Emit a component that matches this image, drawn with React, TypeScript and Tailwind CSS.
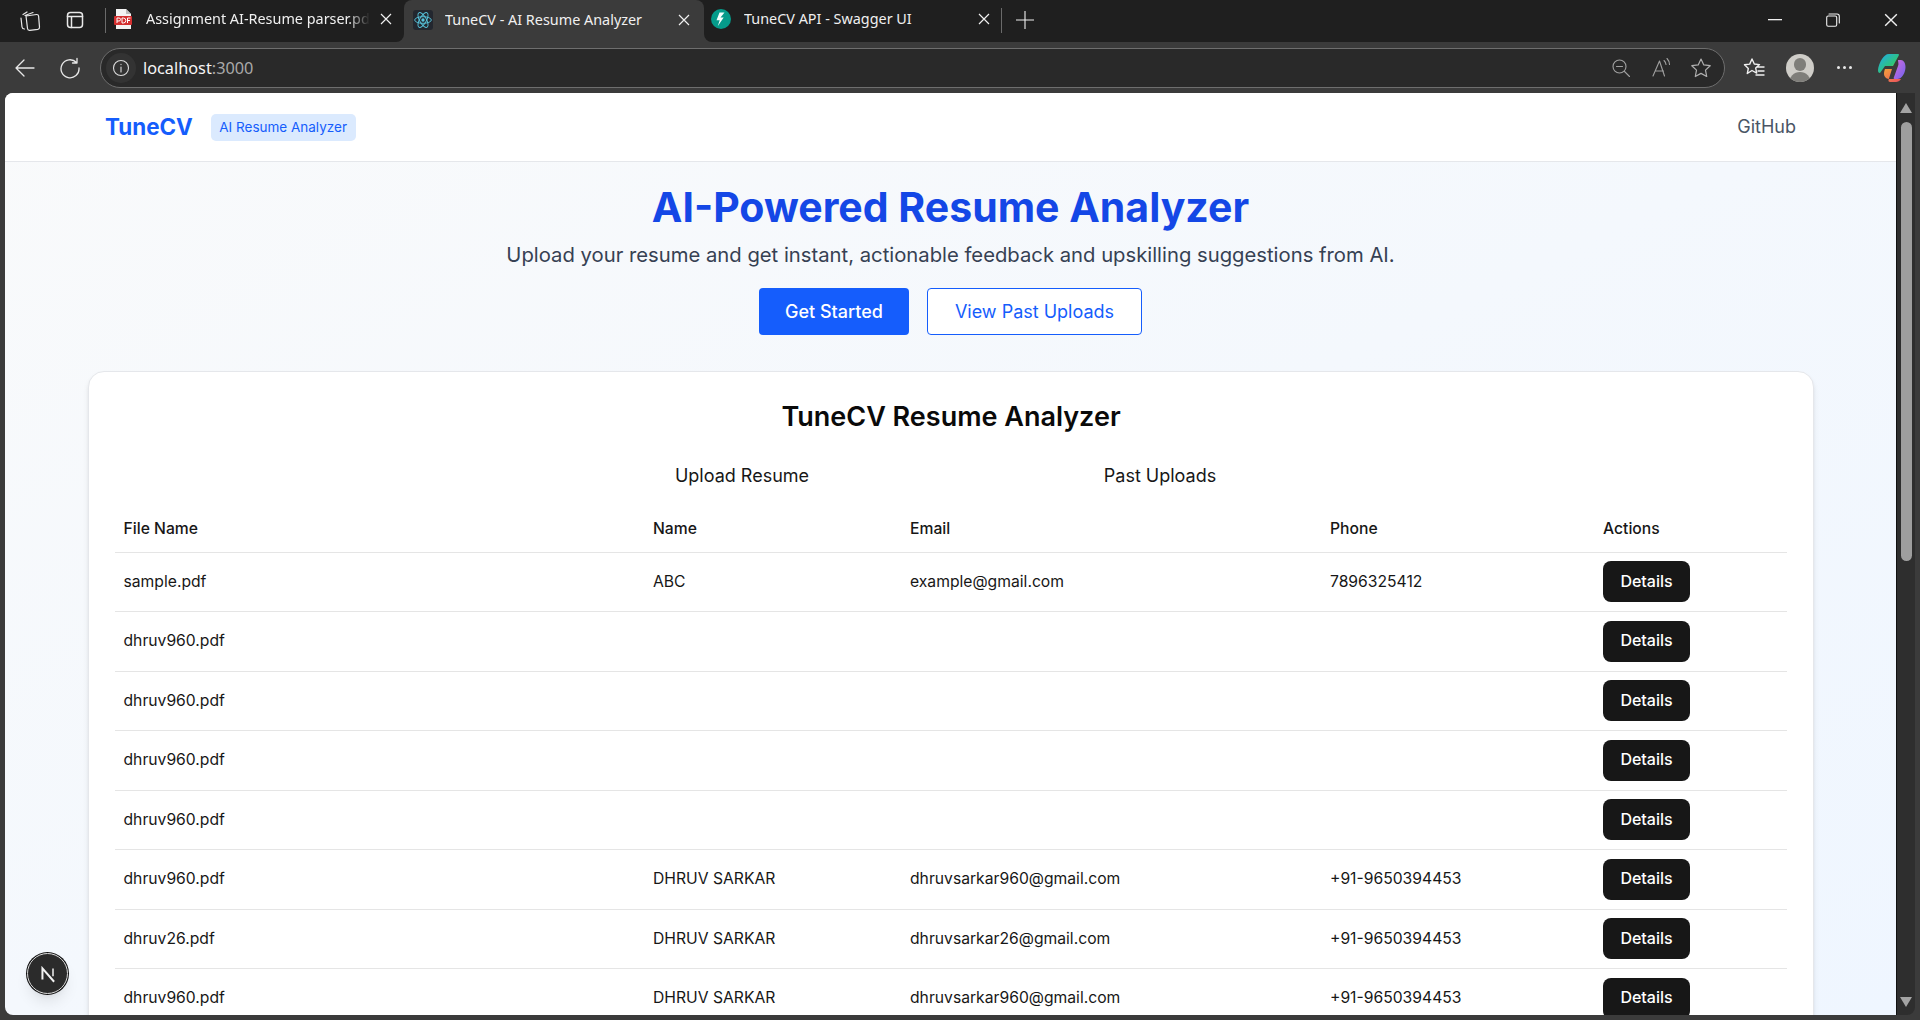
import React from "react";

const Stroke = ({ children, size = 20, w = 1.2, color = "#e8e8e8", vb = 20 }: { children: React.ReactNode; size?: number; w?: number; color?: string; vb?: number }) => (
  <svg width={size} height={size} viewBox={`0 0 ${vb} ${vb}`} fill="none" stroke={color} strokeWidth={w} strokeLinecap="round" strokeLinejoin="round">
    {children}
  </svg>
);

const Close = ({ size = 12 }: { size?: number }) => (
  <svg width={size} height={size} viewBox="0 0 12 12" fill="none" stroke="#f0f0f0" strokeWidth={1.2}>
    <path d="M1 1l10 10M11 1L1 11" />
  </svg>
);

const PdfIcon = () => (
  <svg width="20" height="22" viewBox="0 0 20 22">
    <path d="M3 1h10l5 5v15H3z" fill="#f3f3f3" />
    <path d="M13 1l5 5h-5z" fill="#bdbdbd" />
    <rect x="1" y="8" width="18" height="9" rx="1" fill="#d32f2f" />
    <path d="M4 15v-5h2a1.3 1.3 0 010 3H4M9 10v5h1.3a2.5 2.5 0 000-5zM14.500 15v-5h3M14.500 12.500h2.500" fill="none" stroke="#fff" strokeWidth="1" />
  </svg>
);

const ReactIcon = () => (
  <div className="w-5 h-5 bg-[#23272f] rounded-[3px] flex items-center justify-center">
    <svg width="20" height="20" viewBox="-12 -12 24 24" fill="none" stroke="#58c4dc" strokeWidth="1.1">
      <circle r="2" fill="#58c4dc" stroke="none" />
      <ellipse rx="10" ry="4" />
      <ellipse rx="10" ry="4" transform="rotate(60)" />
      <ellipse rx="10" ry="4" transform="rotate(120)" />
    </svg>
  </div>
);

const FastApiIcon = () => (
  <svg width="20" height="20" viewBox="0 0 20 20">
    <circle cx="10" cy="10" r="10" fill="#059b8a" />
    <path d="M13.500 3.500H8.500L5.500 11.300h3.200l-2 6 6-8.700H9.500z" fill="#f4fffd" />
  </svg>
);

const Copilot = () => (
  <svg width="28" height="30" viewBox="0 0 28 30">
    <defs>
      <linearGradient id="cpa" x1="0" y1="0" x2="1" y2="1">
        <stop offset="0" stopColor="#1fa8f0" />
        <stop offset="0.6" stopColor="#2fc47c" />
        <stop offset="1" stopColor="#e6d92e" />
      </linearGradient>
      <linearGradient id="cpb" x1="0" y1="0" x2="1" y2="1">
        <stop offset="0" stopColor="#d76bdc" />
        <stop offset="1" stopColor="#6f63ee" />
      </linearGradient>
      <linearGradient id="cpc" x1="0" y1="0" x2="1" y2="1">
        <stop offset="0" stopColor="#f2a13a" />
        <stop offset="1" stopColor="#ea4f5f" />
      </linearGradient>
    </defs>
    <path d="M11 1h9c1.500 0 1 1 .5 2L15 13H7l-5 7c-1.500 0-2-1-2-3 0-3 2-8 4-11 2-3 4-5 7-5z" fill="url(#cpa)" />
    <path d="M20 7h3c2.500 0 4.500 3 4.500 7 0 5-2.500 9-5 11-1 .8-2.500 1-4 1h-2c-1 0-1-1-.5-2L20 13c1-2 0-4 0-6z" fill="url(#cpb)" />
    <path d="M7 16h7l-3.500 11c-.3 1 .5 2 1.500 2h6c1.500 0 4-1 5-3H11c-3 0-5-3-5-5 0-2 .5-4 1-5z" fill="url(#cpc)" />
  </svg>
);

const Details = () => (
  <button className="w-[87px] h-[41px] rounded-lg bg-[#171717] text-white text-base font-medium flex items-center justify-center pb-[2px]">Details</button>
);

const rows = [
  ["sample.pdf", "ABC", "example@gmail.com", "7896325412"],
  ["dhruv960.pdf", "", "", ""],
  ["dhruv960.pdf", "", "", ""],
  ["dhruv960.pdf", "", "", ""],
  ["dhruv960.pdf", "", "", ""],
  ["dhruv960.pdf", "DHRUV SARKAR", "dhruvsarkar960@gmail.com", "+91-9650394453"],
  ["dhruv26.pdf", "DHRUV SARKAR", "dhruvsarkar26@gmail.com", "+91-9650394453"],
  ["dhruv960.pdf", "DHRUV SARKAR", "dhruvsarkar960@gmail.com", "+91-9650394453"],
];

const Tab = ({ icon, label, width, pad, textClass }: { icon: React.ReactNode; label: string; width: string; pad: string; textClass: string }) => (
  <div className={`${width} ${pad} h-[42px] pb-[2px] flex items-center shrink-0`}>
    <div className="w-5 flex justify-center shrink-0">{icon}</div>
    <span className={`flex-1 min-w-0 overflow-hidden whitespace-nowrap text-[14.4px] text-[#f0f0f0] [font-family:'Noto_Sans',sans-serif] ${textClass}`}>{label}</span>
    <Close />
  </div>
);

export default function App() {
  return (
    <div className="w-[1920px] h-[1020px] overflow-hidden bg-[#3b3b3b] flex flex-col [font-family:Inter,sans-serif]">
      {/* tab strip */}
      <div className="h-[42px] bg-[#3b3b3b] flex shrink-0">
        <div className="h-[42px] pb-[2px] bg-[#1f1f1f] rounded-br-lg flex items-center shrink-0">
          <div className="w-[52px] flex justify-end pr-[10px]">
            <Stroke size={24} vb={24} w={1.2}>
              <path d="M5 6.500l4-2.500M3 10l1 9c.2 1.300 1.500 2 2.500 2M7 7.500l8-3 M8 8l10.500-1.500c1.200-.1 2 .6 2.100 1.600l.9 11c.1 1.200-.7 2-1.700 2.200l-8 1c-1.200.1-2.200-.6-2.300-1.800L8 8z" />
            </Stroke>
          </div>
          <div className="w-[33px] flex justify-end">
            <Stroke size={20} w={1.5}>
              <rect x="2.500" y="2.500" width="15" height="15" rx="3" />
              <path d="M2.500 6.500h15M6.500 6.500v11" />
            </Stroke>
          </div>
          <div className="w-px h-[25px] bg-[#6a6a6a] ml-[20px]" />
          <Tab icon={<PdfIcon />} label="Assignment AI-Resume parser.pdf" textClass="ml-[13px] mr-[10px] [mask-image:linear-gradient(to_right,black_90%,transparent)]" width="w-[298px]" pad="pl-[7px] pr-[12px]" />
        </div>
        <div className="bg-[#1f1f1f] shrink-0">
          <div className="rounded-t-lg bg-[#3b3b3b]">
            <Tab icon={<ReactIcon />} label="TuneCV - AI Resume Analyzer" textClass="ml-[12px]" width="w-[300px]" pad="pl-[9px] pr-[14px]" />
          </div>
        </div>
        <div className="flex-1 h-[42px] pb-[2px] bg-[#1f1f1f] rounded-bl-lg flex items-center">
          <Tab icon={<FastApiIcon />} label="TuneCV API - Swagger UI" textClass="ml-[13px]" width="w-[297px]" pad="pl-[7px] pr-[11px]" />
          <div className="w-px h-[25px] bg-[#6a6a6a]" />
          <div className="ml-[14px]">
            <svg width="18" height="18" viewBox="0 0 18 18" stroke="#f0f0f0" strokeWidth="1.1"><path d="M9 0v18M0 9h18" /></svg>
          </div>
          <div className="flex-1" />
          <div className="w-[58px] flex justify-center">
            <svg width="14" height="2" viewBox="0 0 14 2"><rect width="14" height="1.300" fill="#f0f0f0" /></svg>
          </div>
          <div className="w-[58px] flex justify-center">
            <Stroke size={14} vb={14} w={1.1} color="#f0f0f0">
              <rect x="0.700" y="3" width="10" height="10.300" rx="1.500" />
              <path d="M3 1h8a2.300 2.300 0 012.300 2.300V10" />
            </Stroke>
          </div>
          <div className="w-[58px] flex justify-center">
            <Close size={14} />
          </div>
        </div>
      </div>

      {/* address row */}
      <div className="h-[51px] flex items-center shrink-0">
        <div className="w-[48px] flex justify-center pl-[2px]">
          <Stroke size={22} w={1.3} vb={22}><path d="M20 11H2M10 3l-8 8 8 8" /></Stroke>
        </div>
        <div className="w-[44px] flex justify-center">
          <Stroke size={22} w={1.3} vb={22}><path d="M17.500 5.500A9 9 0 1020 11M18 1.500v4.500h-4.500" /></Stroke>
        </div>
        <div className="ml-[8px] w-[1625px] h-[40px] rounded-[20px] bg-[#292929] border border-[#6e6e6e] flex items-center">
          <div className="w-[30px] h-[30px] ml-[5px] rounded-full bg-[#333] flex items-center justify-center">
            <Stroke size={18} w={1.1} vb={18} color="#dcdcdc">
              <circle cx="9" cy="9" r="7.500" />
              <path d="M9 8v5M9 5.200v.4" />
            </Stroke>
          </div>
          <span className="ml-[7px] pt-[1px] text-[16.3px] leading-none text-[#f5f5f5] [font-family:'Noto_Sans',sans-serif]">
            localhost<span className="text-[#a8a8a8]">:3000</span>
          </span>
          <div className="flex-1" />
          <Stroke size={20} w={1.1} color="#a0a0a0">
            <circle cx="8.500" cy="8.500" r="6.500" />
            <path d="M5.500 8.500h6M13.500 13.500l5 5" />
          </Stroke>
          <div className="ml-[20px]">
            <Stroke size={22} w={1.1} vb={22} color="#a0a0a0">
              <path d="M2 19L8.500 4l5 15M4.500 14h8M13 3.500a6 6 0 012 4M16 1.500a9 9 0 012.500 6" />
            </Stroke>
          </div>
          <div className="ml-[17px] mr-[12px]">
            <Stroke size={22} w={1.2} vb={22} color="#b0b0b0">
              <path d="M11 2l2.800 5.900 6.400.8-4.700 4.400 1.200 6.400L11 16.400l-5.700 3.100 1.200-6.400-4.700-4.400 6.400-.8z" />
            </Stroke>
          </div>
        </div>
        <div className="ml-[18px]">
          <Stroke size={22} w={1.4} vb={22} color="#f0f0f0">
            <path d="M9 2l2.300 5 5.200.6-3.800 3.500 1 5L9 13.500l-4.700 3 1-5L1.500 7.800l5.200-.7zM14 10h7M15 14h6M13 18h8" />
          </Stroke>
        </div>
        <div className="ml-[21px] w-[28px] h-[28px] rounded-full bg-[#cfcdc8] overflow-hidden flex flex-col items-center">
          <div className="w-[12px] h-[13px] mt-[4px] rounded-full bg-[#7f7e7a] shrink-0" />
          <div className="w-[22px] h-[14px] mt-[1px] rounded-t-full bg-[#7f7e7a] shrink-0" />
        </div>
        <div className="ml-[21px] w-[18px] flex gap-[3px] justify-center">
          <div className="w-[3px] h-[3px] rounded-full bg-[#e8e8e8]" />
          <div className="w-[3px] h-[3px] rounded-full bg-[#e8e8e8]" />
          <div className="w-[3px] h-[3px] rounded-full bg-[#e8e8e8]" />
        </div>
        <div className="ml-[25px]"><Copilot /></div>
      </div>

      {/* browser viewport */}
      <div className="h-[922px] flex shrink-0 pl-[5px] pr-[5px]">
        <div className="w-[1891px] h-[922px] overflow-hidden rounded-tl-lg rounded-bl-lg bg-gradient-to-br from-[#f9fafb] to-[#eff6ff] flex flex-col relative shrink-0">
          <header className="h-[69px] shrink-0 bg-white border-b border-[#e5e7eb] flex items-center px-[100px]">
            <span className="text-[22.4px] font-bold text-[#155dfc]">TuneCV</span>
            <span className="ml-[18px] h-[27px] px-[8.5px] rounded-[5px] bg-[#dbeafe] text-[#155dfc] text-[13.5px] flex items-center">AI Resume Analyzer</span>
            <div className="flex-1" />
            <span className="pb-[2px] text-[18px] text-[#4a5565]">GitHub</span>
          </header>

          <section className="flex flex-col items-center shrink-0">
            <h1 className="mt-[21px] h-[48px] text-[41px] leading-[48px] font-bold text-[#1447e6]">AI-Powered Resume Analyzer</h1>
            <p className="mt-[10px] text-[20.25px] leading-[28px] text-[#364153]">Upload your resume and get instant, actionable feedback and upskilling suggestions from AI.</p>
            <div className="mt-[19px] flex gap-[18px]">
              <button className="w-[150px] h-[47px] rounded-[4px] bg-[#155dfc] text-white text-[18px] font-medium">Get Started</button>
              <button className="w-[215px] h-[47px] rounded-[4px] bg-white border border-[#155dfc] text-[#155dfc] text-[18px]">View Past Uploads</button>
            </div>
          </section>

          <main className="mt-[36px] ml-[83px] w-[1726px] shrink-0 rounded-t-2xl bg-white border border-[#e5e7eb] shadow-md px-[26px] pt-[27px]">
            <h2 className="text-center text-[27px] leading-[36px] font-semibold text-[#0a0a0a]">TuneCV Resume Analyzer</h2>
            <div className="mt-[27px] mx-auto w-[836px] grid grid-cols-2 text-center text-[18px] leading-[28px] text-[#171717]">
              <span>Upload Resume</span>
              <span>Past Uploads</span>
            </div>
            <table className="mt-[17px] w-[1672px] table-fixed text-[15.7px] text-[#171717]">
              <colgroup>
                <col className="w-[530px]" />
                <col className="w-[257px]" />
                <col className="w-[420px]" />
                <col className="w-[273px]" />
                <col className="w-[192px]" />
              </colgroup>
              <thead>
                <tr className="h-[45px] border-b border-[#e5e5e5] text-left">
                  <th className="pl-[8.5px] font-medium">File Name</th>
                  <th className="pl-[8px] font-medium">Name</th>
                  <th className="pl-[8px] font-medium">Email</th>
                  <th className="pl-[8px] font-medium">Phone</th>
                  <th className="pl-[8px] font-medium">Actions</th>
                </tr>
              </thead>
              <tbody>
                {rows.map((r, i) => (
                  <tr key={i} className="h-[59.5px] border-b border-[#e5e5e5]">
                    {r.map((c, j) => (
                      <td key={j} className={j === 0 ? "pl-[8.5px]" : "pl-[8px]"}>{c}</td>
                    ))}
                    <td className="pl-[8px]"><Details /></td>
                  </tr>
                ))}
              </tbody>
            </table>
          </main>

          <div className="absolute left-[22px] bottom-[21px] w-[41px] h-[41px] rounded-full bg-[#2b2b2b] border border-[#dcdcdc] ring-1 ring-[#111] shadow-lg flex items-center justify-center">
            <svg width="20" height="20" viewBox="0 0 18 18" fill="none">
              <path d="M4 14V4l10.500 12" stroke="#f2f2f2" strokeWidth="1.800" />
              <path d="M13.500 4v7" stroke="#bdbdbd" strokeWidth="1.800" />
            </svg>
          </div>
        </div>
        <div className="w-[19px] h-[922px] bg-[#2e2e2e] rounded-br-lg flex flex-col items-center shrink-0 border-l border-[#111]">
          <svg className="mt-[10px]" width="12" height="10" viewBox="0 0 12 10"><path d="M6 0l6 10H0z" fill="#a3a3a3" /></svg>
          <div className="mt-[9px] w-[11px] h-[439px] rounded-full bg-[#9e9e9e]" />
          <div className="flex-1" />
          <svg className="mb-[8px]" width="12" height="10" viewBox="0 0 12 10"><path d="M0 0h12L6 10z" fill="#a3a3a3" /></svg>
        </div>
      </div>
    </div>
  );
}
